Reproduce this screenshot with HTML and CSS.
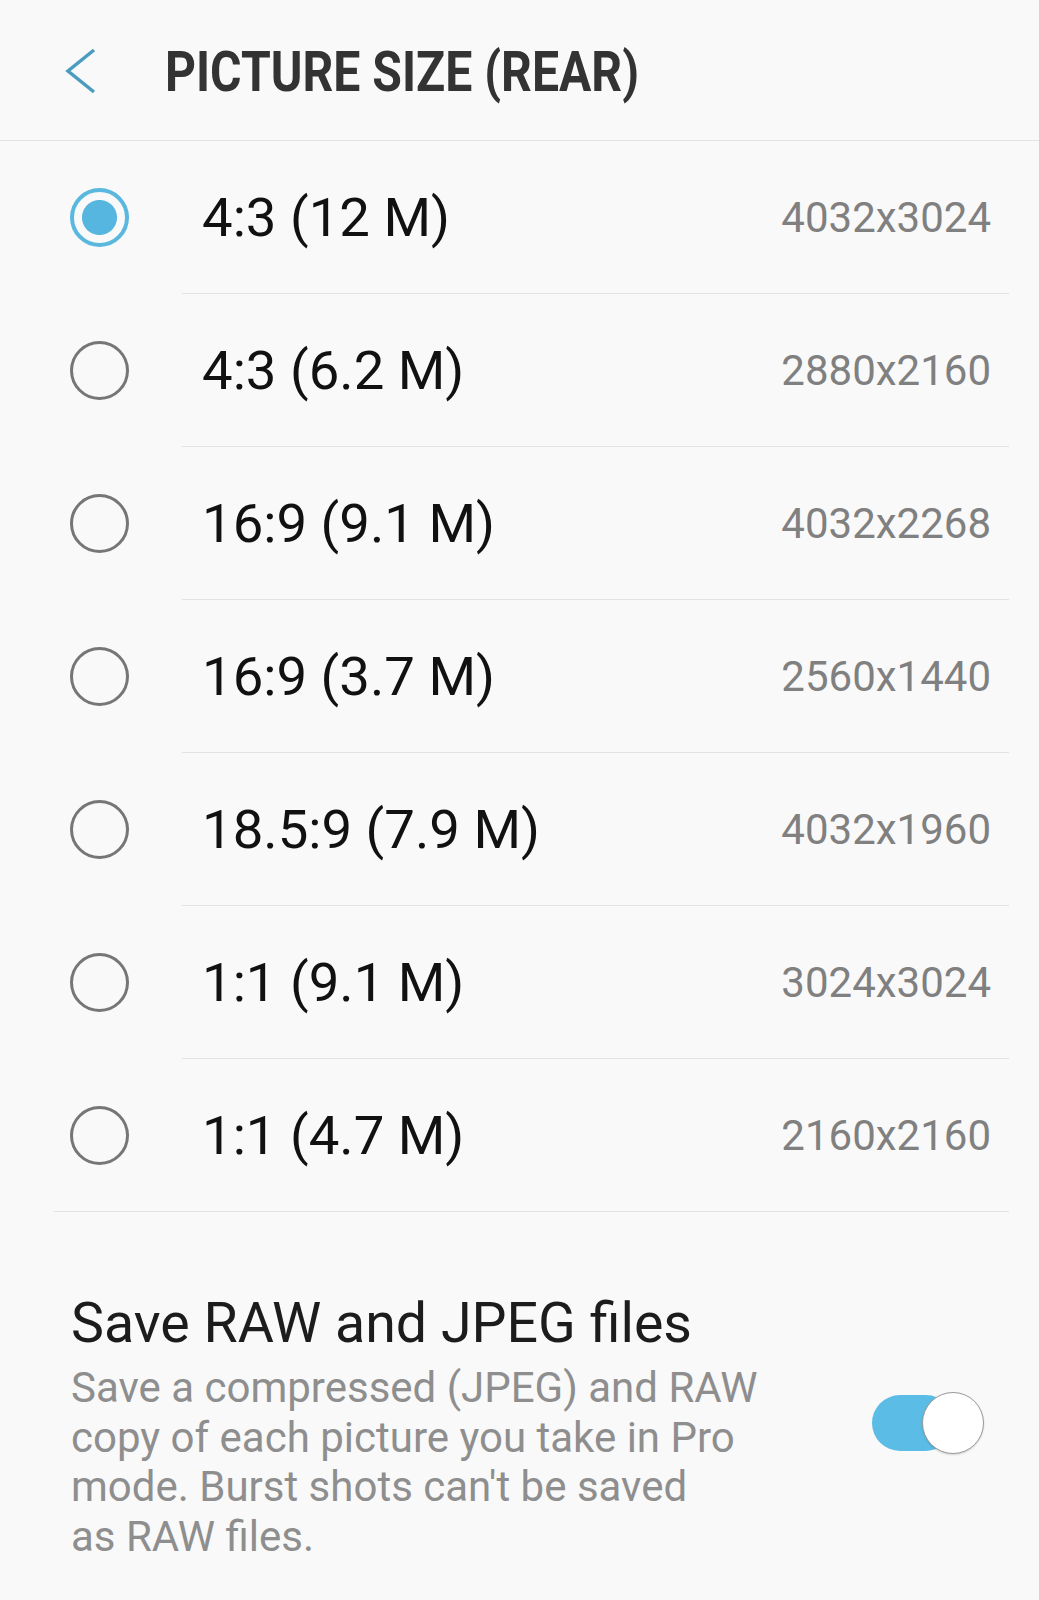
FILE: index.html
```html
<!DOCTYPE html>
<html lang="en">
<head>
    <meta charset="UTF-8">
    <meta name="viewport" content="width=device-width, initial-scale=1.0">
    <title>Picture size (rear)</title>
    <link rel="stylesheet" href="styles.css">
</head>
<body>
    <header class="topbar">
        <svg class="back" width="32" height="46" viewBox="0 0 32 46">
            <polyline points="29,2 3,23 29,44" fill="none" stroke="#4b9cc0" stroke-width="3.5"/>
        </svg>
        <h1 class="title">PICTURE SIZE (REAR)</h1>
    </header>

    <div class="list">
        <div class="row">
            <span class="radio checked"></span>
            <div class="row-body">
                <span class="label">4:3 (12 M)</span>
                <span class="value">4032x3024</span>
            </div>
        </div>
        <div class="row">
            <span class="radio"></span>
            <div class="row-body">
                <span class="label">4:3 (6.2 M)</span>
                <span class="value">2880x2160</span>
            </div>
        </div>
        <div class="row">
            <span class="radio"></span>
            <div class="row-body">
                <span class="label">16:9 (9.1 M)</span>
                <span class="value">4032x2268</span>
            </div>
        </div>
        <div class="row">
            <span class="radio"></span>
            <div class="row-body">
                <span class="label">16:9 (3.7 M)</span>
                <span class="value">2560x1440</span>
            </div>
        </div>
        <div class="row">
            <span class="radio"></span>
            <div class="row-body">
                <span class="label">18.5:9 (7.9 M)</span>
                <span class="value">4032x1960</span>
            </div>
        </div>
        <div class="row">
            <span class="radio"></span>
            <div class="row-body">
                <span class="label">1:1 (9.1 M)</span>
                <span class="value">3024x3024</span>
            </div>
        </div>
        <div class="row">
            <span class="radio"></span>
            <div class="row-body">
                <span class="label">1:1 (4.7 M)</span>
                <span class="value">2160x2160</span>
            </div>
        </div>
    </div>

    <div class="setting">
        <div class="setting-text">
            <h2 class="setting-title">Save RAW and JPEG files</h2>
            <p class="setting-desc">Save a compressed (JPEG) and RAW<br>copy of each picture you take in Pro<br>mode. Burst shots can't be saved<br>as RAW files.</p>
        </div>
        <div class="switch">
            <span class="track"></span>
            <span class="thumb"></span>
        </div>
    </div>
</body>
</html>
```

FILE: styles.css
```css
body {
    margin: 0;
    background: #f9f9f9;
    font-family: Roboto, 'Noto Sans', sans-serif;
    color: #111;
}
.topbar {
    display: flex;
    align-items: center;
    height: 136px;
    padding: 4px 0 0 65px;
    border-bottom: 1px solid #e2e2e2;
}
.back {
    display: block;
    margin-top: -2px;
}
.title {
    margin: 0 0 0 68px;
    font-weight: bold;
    font-size: 55px;
    color: #333;
    white-space: nowrap;
    /* the phone uses a condensed face */
    transform: scaleX(0.875);
    transform-origin: left center;
}
.list {
    margin: 0 30px 0 54px;
    border-bottom: 1px solid #e2e2e2;
}
.row {
    display: flex;
    align-items: center;
}
.radio {
    box-sizing: border-box;
    width: 59px;
    height: 59px;
    margin: 0 53px 0 16px;
    border: 3px solid #767676;
    border-radius: 50%;
    flex: none;
}
.radio.checked {
    border: 4px solid #5ab8df;
    background: radial-gradient(circle, #56b6e0 0, #56b6e0 17px, transparent 18px);
}
.row-body {
    flex: 1;
    display: flex;
    align-items: center;
    height: 152px;
    padding: 0 18px 0 20px;
    border-bottom: 1px solid #e2e2e2;
}
.row:last-child .row-body {
    border-bottom: none;
}
.label {
    font-size: 54.5px;
    color: #111;
}
.value {
    margin-left: auto;
    font-size: 42px;
    color: #808080;
}
.setting {
    display: flex;
    align-items: center;
    padding: 80px 55px 0 71px;
}
.setting-text {
    flex: 1;
}
.setting-title {
    margin: 0;
    font-weight: normal;
    font-size: 55.5px;
    line-height: 64px;
    color: #1c1c1c;
}
.setting-desc {
    margin: 7px 0 0;
    font-size: 42px;
    line-height: 49.5px;
    color: #8e8e8e;
}
.switch {
    display: flex;
    align-items: center;
    margin-bottom: 8px;
}
.track {
    width: 82px;
    height: 56px;
    border-radius: 28px;
    background: #5bbde6;
}
.thumb {
    box-sizing: border-box;
    width: 62px;
    height: 62px;
    margin-left: -32px;
    border-radius: 50%;
    background: #fff;
    border: 1.5px solid #9a9a9a;
    box-shadow: 0 1px 2px rgba(0, 0, 0, 0.15);
}
```
